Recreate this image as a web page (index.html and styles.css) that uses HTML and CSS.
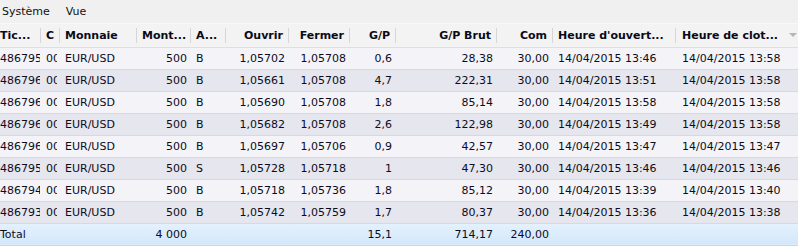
FILE: index.html
```html
<!DOCTYPE html>
<html lang="fr">
<head>
<meta charset="utf-8">
<link rel="stylesheet" href="styles.css">
</head>
<body>
<div class="menubar">
  <span class="menu-item">Système</span>
  <span class="menu-item">Vue</span>
</div>
<table class="grid">
  <colgroup>
    <col class="c-tic"><col class="c-c"><col class="c-mon"><col class="c-amt"><col class="c-a">
    <col class="c-ouv"><col class="c-fer"><col class="c-gp"><col class="c-gpb"><col class="c-com">
    <col class="c-ho"><col class="c-hc">
  </colgroup>
  <thead>
    <tr>
      <th class="l sep">Tic...</th>
      <th class="l sep">C</th>
      <th class="l sep">Monnaie</th>
      <th class="r sep">Mont...</th>
      <th class="l sep">A...</th>
      <th class="r sep">Ouvrir</th>
      <th class="r sep">Fermer</th>
      <th class="r sep">G/P</th>
      <th class="r sep">G/P Brut</th>
      <th class="r sep">Com</th>
      <th class="l sep">Heure d'ouvert...</th>
      <th class="l last">Heure de clot...<span class="sort"></span></th>
    </tr>
  </thead>
  <tbody>
    <tr class="odd"><td><span class="clip">486795</span></td><td><span class="clip">00</span></td><td>EUR/USD</td><td class="r">500</td><td>B</td><td class="r">1,05702</td><td class="r">1,05708</td><td class="r">0,6</td><td class="r">28,38</td><td class="r">30,00</td><td>14/04/2015 13:46</td><td class="hc">14/04/2015 13:58</td></tr>
    <tr class="even"><td><span class="clip">486796</span></td><td><span class="clip">00</span></td><td>EUR/USD</td><td class="r">500</td><td>B</td><td class="r">1,05661</td><td class="r">1,05708</td><td class="r">4,7</td><td class="r">222,31</td><td class="r">30,00</td><td>14/04/2015 13:51</td><td class="hc">14/04/2015 13:58</td></tr>
    <tr class="odd"><td><span class="clip">486796</span></td><td><span class="clip">00</span></td><td>EUR/USD</td><td class="r">500</td><td>B</td><td class="r">1,05690</td><td class="r">1,05708</td><td class="r">1,8</td><td class="r">85,14</td><td class="r">30,00</td><td>14/04/2015 13:58</td><td class="hc">14/04/2015 13:58</td></tr>
    <tr class="even"><td><span class="clip">486796</span></td><td><span class="clip">00</span></td><td>EUR/USD</td><td class="r">500</td><td>B</td><td class="r">1,05682</td><td class="r">1,05708</td><td class="r">2,6</td><td class="r">122,98</td><td class="r">30,00</td><td>14/04/2015 13:49</td><td class="hc">14/04/2015 13:58</td></tr>
    <tr class="odd"><td><span class="clip">486796</span></td><td><span class="clip">00</span></td><td>EUR/USD</td><td class="r">500</td><td>B</td><td class="r">1,05697</td><td class="r">1,05706</td><td class="r">0,9</td><td class="r">42,57</td><td class="r">30,00</td><td>14/04/2015 13:47</td><td class="hc">14/04/2015 13:47</td></tr>
    <tr class="even"><td><span class="clip">486795</span></td><td><span class="clip">00</span></td><td>EUR/USD</td><td class="r">500</td><td>S</td><td class="r">1,05728</td><td class="r">1,05718</td><td class="r">1</td><td class="r">47,30</td><td class="r">30,00</td><td>14/04/2015 13:46</td><td class="hc">14/04/2015 13:46</td></tr>
    <tr class="odd"><td><span class="clip">486794</span></td><td><span class="clip">00</span></td><td>EUR/USD</td><td class="r">500</td><td>B</td><td class="r">1,05718</td><td class="r">1,05736</td><td class="r">1,8</td><td class="r">85,12</td><td class="r">30,00</td><td>14/04/2015 13:39</td><td class="hc">14/04/2015 13:40</td></tr>
    <tr class="even"><td><span class="clip">486793</span></td><td><span class="clip">00</span></td><td>EUR/USD</td><td class="r">500</td><td>B</td><td class="r">1,05742</td><td class="r">1,05759</td><td class="r">1,7</td><td class="r">80,37</td><td class="r">30,00</td><td>14/04/2015 13:36</td><td class="hc">14/04/2015 13:38</td></tr>
  </tbody>
  <tfoot>
    <tr class="total"><td colspan="3">Total</td><td class="r">4 000</td><td></td><td></td><td></td><td class="r">15,1</td><td class="r">714,17</td><td class="r">240,00</td><td></td><td></td></tr>
  </tfoot>
</table>
</body>
</html>
```
FILE: styles.css
```css
html, body {
  margin: 0;
  padding: 0;
  background: #ffffff;
  width: 798px;
  height: 248px;
  overflow: hidden;
}
body {
  font-family: "DejaVu Sans", Verdana, sans-serif;
  font-size: 11px;
  color: #0c0c1c;
}
.menubar {
  height: 24px;
  background: #f0f0f0;
  display: flex;
  align-items: center;
  gap: 16px;
  padding-left: 2px;
  box-sizing: border-box;
  border-bottom: 1px solid #f8f8f8;
}
.menu-item {
  color: #111;
}
.grid {
  border-collapse: collapse;
  table-layout: fixed;
  width: 798px;
}
.c-tic { width: 41px; }
.c-c { width: 19px; }
.c-mon { width: 77px; }
.c-amt { width: 54px; }
.c-a { width: 35px; }
.c-ouv { width: 63px; }
.c-fer { width: 61px; }
.c-gp { width: 46px; }
.c-gpb { width: 101px; }
.c-com { width: 56px; }
.c-ho { width: 123px; }
.c-hc { width: 122px; }
th, td {
  white-space: nowrap;
  overflow: hidden;
  text-overflow: clip;
  padding: 0 0 0 5px;
  box-sizing: border-box;
}
thead th {
  height: 23px;
  background: #f3f3f3;
  font-weight: bold;
  color: #0a0a18;
  border-bottom: 1px solid #dedee2;
}
th.l { text-align: left; }
th.r { text-align: right; padding-right: 6px; }
th.sep {
  background: #f3f3f3 linear-gradient(#d6d6da, #d6d6da) no-repeat right 4px / 1px 15px;
}
th:first-child, td:first-child { padding-left: 0; }
th.last { padding-left: 6px; }
.sort {
  display: inline-block;
  width: 0;
  height: 0;
  border-left: 4px solid transparent;
  border-right: 4px solid transparent;
  border-top: 4px solid #b4b4bc;
  margin-left: 11px;
  vertical-align: 2px;
}
td {
  height: 22px;
  text-align: left;
  border-bottom: 1px solid #d8d8e0;
}
.clip {
  display: block;
  overflow: hidden;
  margin-right: 3px;
}
td:first-child .clip { margin-right: 1px; }
td.r { text-align: right; padding-right: 4px; }
td.hc { padding-left: 6px; }
tr.odd td { background: #f4f4f8; }
tr.even td { background: #e6e6ee; }
tr.total td {
  background: linear-gradient(#e4f1fd, #d3e7fa);
  border-bottom: 1px solid #c6d8ea;
  height: 22px;
}
```
